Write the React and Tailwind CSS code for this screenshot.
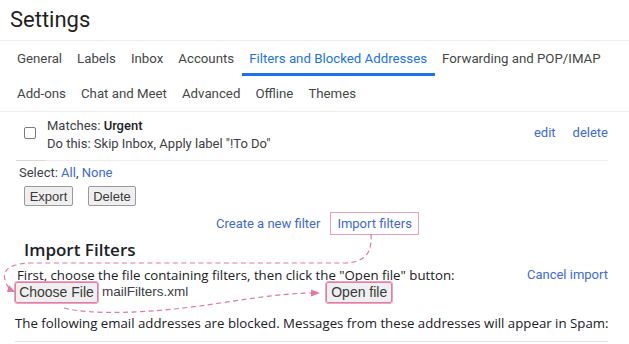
import React from 'react';

const tabsTop = ['General', 'Labels', 'Inbox', 'Accounts', 'Filters and Blocked Addresses', 'Forwarding and POP/IMAP'];
const tabsBottom = ['Add-ons', 'Chat and Meet', 'Advanced', 'Offline', 'Themes'];
const active = 'Filters and Blocked Addresses';

function Tab({ label }) {
  const on = label === active;
  return (
    <div
      className={`h-full shrink-0 whitespace-nowrap flex items-center px-[7.5px] border-b-[3px] ${
        on ? 'border-[#1a73e8] text-[#1a73e8]' : 'border-transparent text-[#444746]'
      }`}
    >
      <span className="pt-[3px]">{label}</span>
    </div>
  );
}

function Btn({ children, marked, className = '' }) {
  return (
    <button
      className={`h-[20px] px-0 whitespace-nowrap text-[13px] leading-none text-[#3a3a3a] bg-[#efefef] rounded-[2px] border font-['Liberation_Sans',Arial,sans-serif] ${
        marked ? 'border-[#e47aa6] outline outline-1 outline-[#e9a5c1]' : 'border-[#9a9a9a]'
      } ${className}`}
    >
      {children}
    </button>
  );
}

function Arrows() {
  return (
    <svg className="absolute inset-0 pointer-events-none" width="629" height="344" viewBox="0 0 629 344" fill="none">
      <g stroke="#e377a6" strokeWidth="1.2" strokeDasharray="5 3.5">
        <path d="M371 234 C372 250 368 262 345 263 L30 263 C6 264 3 272 5 280 C6 285 9 288 11 290" />
        <path d="M64 308 C90 315 150 314 220 303 C260 297 290 293 312 293" />
      </g>
      <path d="M9 285 L15 292 L7 292 Z" fill="#e377a6" />
      <path d="M311 289.5 L320 293 L311 296.5 Z" fill="#e377a6" />
    </svg>
  );
}

export default function App() {
  return (
    <div className="relative w-[629px] h-[344px] overflow-hidden bg-white text-[#202124] font-['Roboto','Liberation_Sans',sans-serif]">
      <h1 className="h-[41px] pl-[10px] pt-[5px] text-[22px] leading-[30px] text-[#1f1f1f] border-b border-[#ececec]">
        Settings
      </h1>

      <div className="text-[13.25px]">
        <div className="h-[35px] flex pl-[9.5px]">
          {tabsTop.map((t) => (
            <Tab key={t} label={t} />
          ))}
        </div>
        <div className="h-[36px] flex pl-[9.5px] border-b border-[#ececec]">
          {tabsBottom.map((t) => (
            <Tab key={t} label={t} />
          ))}
        </div>
      </div>

      <div className="mx-[16px] w-[592px] h-[49px] flex items-center border-b border-[#ececec] text-[13px]">
        <div className="w-[31px] pl-[8px] -mt-[7px]">
          <div className="w-[12px] h-[12px] border border-[#7a7a7a] rounded-[2px]" />
        </div>
        <div className="flex-1 leading-[18px] -mt-[3px]">
          <div className="text-[#3c4043]">
            Matches: <b className="font-medium text-[#202124]">Urgent</b>
          </div>
          <div className="text-[#3c4043]">Do this: Skip Inbox, Apply label "!To Do"</div>
        </div>
        <div className="flex gap-[17px] text-[#4168d6] -mt-[6px]">
          <span>edit</span>
          <span>delete</span>
        </div>
      </div>
      <div className="-mt-px ml-[16px] w-[29px] h-px bg-[#d8d8d8]" />

      <div className="pl-[19px] pt-[2px] text-[13px] leading-[20px] text-[#3c4043]">
        Select: <span className="text-[#4168d6]">All</span>, <span className="text-[#4168d6]">None</span>
      </div>
      <div className="pl-[24px] pt-[3px] flex gap-[15px]">
        <Btn className="w-[49px]">Export</Btn>
        <Btn className="w-[48px]">Delete</Btn>
      </div>

      <div className="mt-[6px] flex items-center text-[13px] pl-[216px] h-[23px]">
        <span className="text-[#4168d6]">Create a new filter</span>
        <span className="ml-[10px] h-[23px] px-[6px] flex items-center text-[#4168d6] border border-[#e9a0bf]">
          Import filters
        </span>
      </div>

      <h2 className="pl-[24px] mt-[3px] h-[24px] leading-[24px] text-[17px] font-semibold text-[#202124] font-['Open_Sans','Roboto',sans-serif]">
        Import Filters
      </h2>

      <div className="mx-[17px] w-[591px] flex justify-between text-[13.25px] leading-[18px] mt-[4px] font-['Open_Sans','Roboto',sans-serif]">
        <span className="text-[#202124] whitespace-nowrap">First, choose the file containing filters, then click the "Open file" button:</span>
        <span className="text-[#4168d6] font-['Roboto',sans-serif] text-[13px]">Cancel import</span>
      </div>
      <div className="pl-[15px] -mt-[3px] flex items-center h-[22px]">
        <Btn marked className="w-[83px] h-[21px] text-[14px]">Choose File</Btn>
        <span className="ml-[4px] text-[13.5px] text-[#3c4043] font-['Liberation_Sans',Arial,sans-serif]">mailFilters.xml</span>
        <Btn marked className="ml-[138px] w-[66px] h-[21px] text-[14px]">Open file</Btn>
      </div>

      <div className="pl-[15px] pt-[11px] whitespace-nowrap text-[13.25px] leading-[18px] text-[#202124] font-['Open_Sans','Roboto',sans-serif]">
        The following email addresses are blocked. Messages from these addresses will appear in Spam:
      </div>
      <div className="mt-[9px] ml-[15px] w-[593px] h-px bg-[#e3e3e3]" />

      <Arrows />
    </div>
  );
}
